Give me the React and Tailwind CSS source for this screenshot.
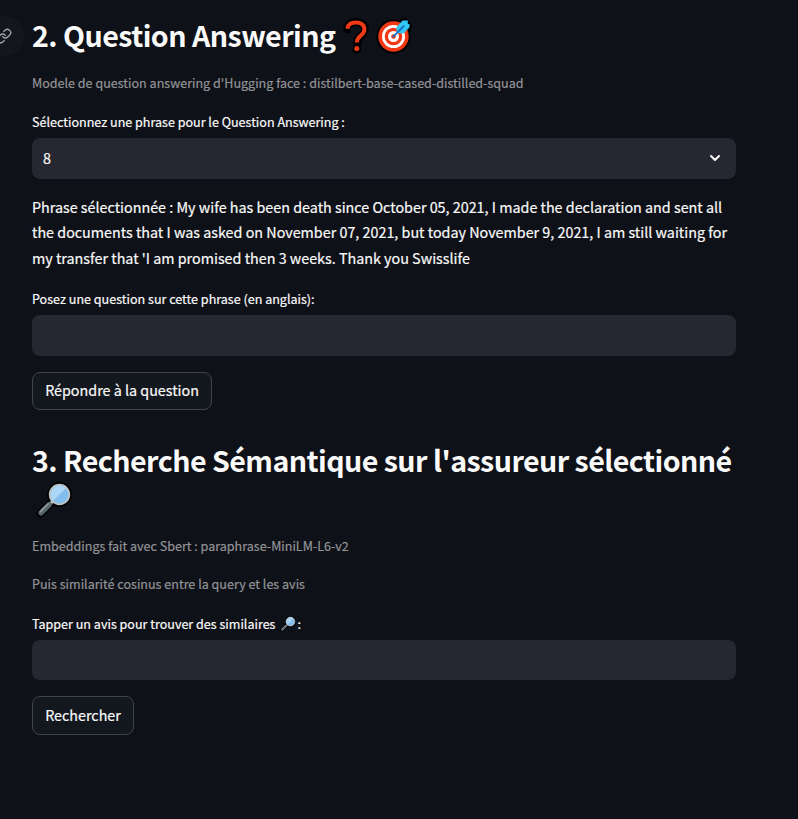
function QuestionMark() {
  return (
    <svg className="ml-[7px] block h-[36px] w-[29px] shrink-0" viewBox="0 0 29 36" fill="none" strokeLinecap="round">
      <path d="M5.4 11.2C5.4 6.4 9 4 14 4s8.800 2.800 8.800 7.400c0 6.600-7.700 6-7.700 14.200" stroke="#000" strokeWidth="8" />
      <circle cx="14.800" cy="31" r="4.500" fill="#000" />
      <path d="M5.400 10.700C5.900 6.500 9 4.600 14 4.600s8.400 2.600 8.400 6.800c0 6.200-7.600 6-7.600 13.200" stroke="#f03a17" strokeWidth="4" strokeLinecap="butt" />
      <circle cx="14.800" cy="30.500" r="2.500" fill="#f03a17" />
    </svg>
  );
}

function Target() {
  return (
    <svg className="ml-[5px] block h-[36px] w-[36px] shrink-0" viewBox="0 0 36 36">
      <circle cx="17.500" cy="18.500" r="17" fill="#000" />
      <path d="M18 9 25 2l5-1 2 4 3 2-1 6-8 7z" fill="#000" stroke="#000" strokeWidth="2" strokeLinejoin="round" />
      <circle cx="17.500" cy="18.500" r="15.200" fill="#f03a17" />
      <circle cx="17.500" cy="18.500" r="11.500" fill="#fff" />
      <circle cx="17.500" cy="18.500" r="8.800" fill="#f03a17" />
      <circle cx="17.500" cy="18.500" r="5.500" fill="#fff" />
      <circle cx="17.500" cy="18.500" r="2.300" fill="#f03a17" />
      <path d="M20.500 14.500V9.200L26.500 2.600h5.300v3.200l2 .8-.6 3.200-5.800 5.600-6.900-.3z" fill="#32c8f4" />
      <path d="m17.300 18.700 10.500-10.500" stroke="#0f6fc5" strokeWidth="1.800" strokeLinecap="round" />
    </svg>
  );
}

function Magnifier({ className }) {
  return (
    <svg className={className} viewBox="0 0 36 36" fill="none">
      <circle cx="23.500" cy="12.500" r="12.400" fill="#000" />
      <path d="M4.500 31.500 16 20" stroke="#000" strokeWidth="8" strokeLinecap="round" />
      <path d="m13.500 22.500 3.500-3.500" stroke="#b9c1c4" strokeWidth="3" />
      <path d="m5 30.800 8.200-8.200" stroke="#586569" strokeWidth="5.400" strokeLinecap="round" />
      <path d="m4.400 29.600 7.800-7.800" stroke="#8b9699" strokeWidth="1.800" strokeLinecap="round" />
      <circle cx="23.500" cy="12.500" r="9.800" fill="#82bdee" stroke="#bdc3c7" strokeWidth="1.800" />
      <path d="M17.200 18.800a8.900 8.900 0 0 1 12.600-12.600z" fill="#acd6f5" />
    </svg>
  );
}

function LinkIcon() {
  return (
    <svg className="block h-4 w-4" viewBox="0 0 24 24" fill="none" stroke="#a3a5a9" strokeWidth="2" strokeLinecap="round" strokeLinejoin="round">
      <path d="M10 13a5 5 0 0 0 7.540.540l3-3a5 5 0 0 0-7.070-7.070l-1.720 1.710" />
      <path d="M14 11a5 5 0 0 0-7.540-.540l-3 3a5 5 0 0 0 7.070 7.070l1.710-1.710" />
    </svg>
  );
}

function Button({ className, children }) {
  return (
    <button className={`flex items-center justify-center whitespace-nowrap rounded-lg border border-[#41444c] bg-[#13171e] pb-[2px] text-[14.320px] ${className}`}>
      {children}
    </button>
  );
}

export default function App() {
  return (
    <div className="h-[819px] w-[798px] overflow-hidden bg-[#0e1117] font-['Noto_Sans_CJK_SC',sans-serif] text-[14.330px] text-[#fafafa] [-webkit-text-stroke:0.2px]">
      <main className="flex w-[768px] flex-col px-8">
        <h2 className="flex h-[72px] items-center whitespace-nowrap text-[28.600px] font-bold tracking-[-0.540px] [-webkit-text-stroke:0]">
          <span className="-ml-[48px] mr-2 flex h-10 w-10 shrink-0 items-center justify-center rounded-full bg-[#13161d]">
            <LinkIcon />
          </span>
          <span className="w-[303px] pb-[2px]">2. Question Answering</span>
          <QuestionMark />
          <Target />
        </h2>
        <p className="h-[22px] whitespace-nowrap text-[12.550px] leading-[22px] text-[#939497]">Modele de question answering d'Hugging face : distilbert-base-cased-distilled-squad</p>
        <label className="mt-[17px] h-[22px] whitespace-nowrap text-[12.550px] leading-[22px]">Sélectionnez une phrase pour le Question Answering :</label>
        <div className="mt-[5px] flex h-[41px] items-center justify-between rounded-lg bg-[#262730] pb-[2px] pl-[11px] pr-[15px]">
          <span>8</span>
          <svg className="block h-3 w-3" viewBox="0 0 12 12" fill="none" stroke="#fafafa" strokeWidth="2" strokeLinecap="round" strokeLinejoin="round">
            <path d="m2 4 4 4 4-4" />
          </svg>
        </div>
        <p className="mt-[15px] h-[77px] whitespace-nowrap leading-[26px]">
          <span className="block h-[25px]">Phrase sélectionnée : My wife has been death since October 05, 2021, I made the declaration and sent all</span>
          <span className="block">the documents that I was asked on November 07, 2021, but today November 9, 2021, I am still waiting for</span>
          <span className="block">my transfer that 'I am promised then 3 weeks. Thank you Swisslife</span>
        </p>
        <label className="mt-[17px] h-[22px] whitespace-nowrap text-[12.550px] leading-[22px]">Posez une question sur cette phrase (en anglais):</label>
        <div className="mt-[5px] h-[41px] rounded-lg bg-[#262730]" />
        <Button className="mt-4 h-[38px] w-[180px]">Répondre à la question</Button>
        <h2 className="mt-[31px] whitespace-nowrap text-[28.600px] font-bold leading-[38.400px] tracking-[-0.540px] [-webkit-text-stroke:0]">
          <span className="block">3. Recherche Sémantique sur l'assureur sélectionné</span>
          <Magnifier className="ml-[4px] mt-[3px] block h-[36px] w-[36px]" />
        </h2>
        <p className="mt-[17px] h-[22px] whitespace-nowrap text-[12.550px] leading-[22px] text-[#939497]">Embeddings fait avec Sbert : paraphrase-MiniLM-L6-v2</p>
        <p className="mt-4 h-[22px] whitespace-nowrap text-[12.550px] leading-[22px] text-[#939497]">Puis similarité cosinus entre la query et les avis</p>
        <label className="mt-[18px] flex h-[22px] items-center whitespace-nowrap text-[12.550px] leading-[22px]">
          <span>Tapper un avis pour trouver des similaires</span>
          <Magnifier className="ml-[5px] block h-4 w-4" />
          <span className="ml-px">:</span>
        </label>
        <div className="mt-[5px] h-10 rounded-lg bg-[#262730]" />
        <Button className="mt-4 h-[39px] w-[102px]">Rechercher</Button>
      </main>
    </div>
  );
}
